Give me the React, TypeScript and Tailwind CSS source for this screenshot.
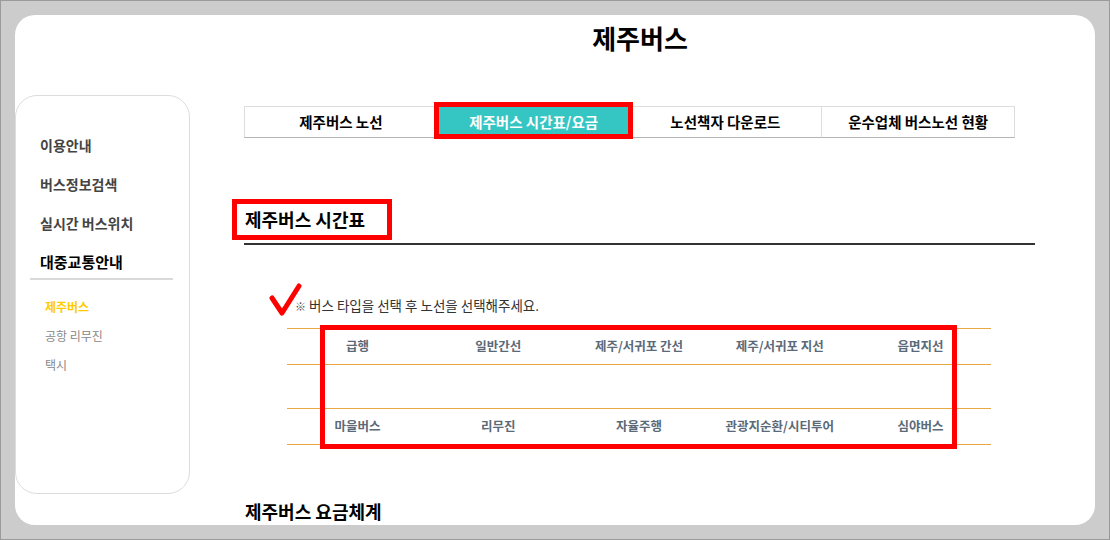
import React from 'react';

const sideMenu = ['이용안내', '버스정보검색', '실시간 버스위치'];
const subMenu = [
  { label: '제주버스', active: true },
  { label: '공항 리무진', active: false },
  { label: '택시', active: false },
];
const tabs = ['제주버스 노선', '제주버스 시간표/요금', '노선책자 다운로드', '운수업체 버스노선 현황'];
const busTypesTop = ['급행', '일반간선', '제주/서귀포 간선', '제주/서귀포 지선', '읍면지선'];
const busTypesBottom = ['마을버스', '리무진', '자율주행', '관광지순환/시티투어', '심야버스'];

const App: React.FC = () => {
  return (
    <div className="w-[1110px] h-[540px] bg-[#cccccc] border border-[#9a9a9a] p-[14px] overflow-hidden font-['Noto_Sans_CJK_KR','Malgun_Gothic',sans-serif]">
      <div className="h-full bg-white rounded-[20px] flex overflow-hidden">
        {/* Sidebar */}
        <aside className="w-[175px] shrink-0 mt-[80px] h-[399px] border border-[#dcdcdc] rounded-[22px] pt-[38px] pl-[24px]">
          <ul className="flex flex-col gap-[17px]">
            {sideMenu.map((item) => (
              <li key={item} className="text-[14px] leading-[22px] font-bold text-[#444]">
                {item}
              </li>
            ))}
            <li className="text-[15px] leading-[22px] font-bold text-black">대중교통안내</li>
          </ul>
          <div className="-ml-[10px] mt-[5px] w-[143px] h-[2px] bg-[#dadada]" />
          <ul className="mt-[16px] ml-[5px] flex flex-col gap-[8px]">
            {subMenu.map((item) => (
              <li
                key={item.label}
                className={
                  item.active
                    ? 'text-[12px] leading-[21px] font-bold text-[#ffcc00]'
                    : 'text-[12px] leading-[21px] text-[#888]'
                }
              >
                {item.label}
              </li>
            ))}
          </ul>
        </aside>

        {/* Main */}
        <main className="flex-1 flex flex-col">
          <h1 className="pt-[6px] pr-[5px] text-[26px] leading-[34px] font-bold text-center text-black">제주버스</h1>

          {/* Tabs */}
          <div className="mt-[51px] ml-[54px] w-[771px] h-[37px] flex">
            {tabs.map((tab, i) => {
              const active = i === 1;
              return (
                <div
                  key={tab}
                  className={
                    active
                      ? 'relative flex-1 flex items-center justify-center bg-[#35c6c3] text-white text-[14.5px] font-bold'
                      : `flex-1 flex items-center justify-center border-t border-r border-b border-[#dddddd] border-b-[#b5b5b5] text-[14.5px] font-bold text-black ${i === 0 ? 'border-l' : ''}`
                  }
                >
                  {tab}
                  {active && (
                    <span className="absolute -left-[4px] -top-[4px] -right-[3px] -bottom-[1px] border-[5px] border-[#ff0000]" />
                  )}
                </div>
              );
            })}
          </div>

          {/* Timetable heading */}
          <div className="relative mt-[67px] ml-[54px] w-[791px] border-b-2 border-[#333] pb-[10px]">
            <h2 className="pl-[1px] text-[18px] leading-[28px] font-bold text-black">제주버스 시간표</h2>
            <span className="absolute -left-[12px] -top-[6px] w-[160px] h-[41px] border-[5px] border-[#ff0000]" />
          </div>

          {/* Note */}
          <div className="relative mt-[50px] ml-[54px] pl-[51px] text-[13.5px] leading-[20px] text-[#333]">
            <svg className="absolute left-[22px] -top-[13px]" width="36" height="36" viewBox="0 0 36 36">
              <path d="M6 16 L16 31 L33 4" fill="none" stroke="#ff0000" strokeWidth="5" strokeLinecap="round" strokeLinejoin="round" />
            </svg>
            <span className="text-[11px] text-[#555]">※</span> 버스 타입을 선택 후 노선을 선택해주세요.
          </div>

          {/* Bus type table */}
          <div className="relative mt-[12px] ml-[97px] w-[704px]">
            <div className="grid grid-cols-5 h-[36px] border-t border-[#eaa845] items-center">
              {busTypesTop.map((t) => (
                <span key={t} className="text-center text-[12.5px] font-bold text-[#5b6a78]">
                  {t}
                </span>
              ))}
            </div>
            <div className="h-[44px] border-t border-[#eaa845]" />
            <div className="grid grid-cols-5 h-[37px] border-t border-b border-[#eaa845] items-center">
              {busTypesBottom.map((t) => (
                <span key={t} className="text-center text-[12.5px] font-bold text-[#5b6a78]">
                  {t}
                </span>
              ))}
            </div>
            <span className="absolute left-[33px] -top-[3px] w-[637px] h-[124px] border-[5px] border-[#ff0000]" />
          </div>

          {/* Fare heading */}
          <h2 className="mt-[52px] ml-[55px] text-[18px] leading-[28px] font-bold text-black">제주버스 요금체계</h2>
        </main>
      </div>
    </div>
  );
};

export default App;
